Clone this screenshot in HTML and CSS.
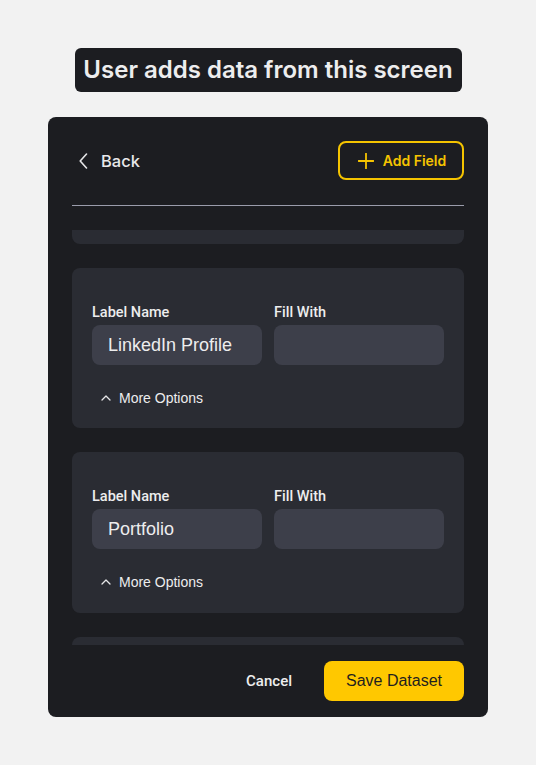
FILE: index.html
```html
<!DOCTYPE html>
<html>
<head>
<meta charset="utf-8">
<link rel="stylesheet" href="styles.css">
</head>
<body>
<div class="page">
  <div class="title">User adds data from this screen</div>
  <div class="panel">
    <div class="header">
      <div class="back">
        <svg class="back-icon" width="9" height="16" viewBox="0 0 9 16"><path d="M7.5 1 L1.2 8 L7.5 15" fill="none" stroke="#e6e6e8" stroke-width="1.6" stroke-linecap="round" stroke-linejoin="round"/></svg>
        <span>Back</span>
      </div>
      <button class="add-btn">
        <svg width="16" height="16" viewBox="0 0 16 16"><path d="M8 0.5 V15.5 M0.5 8 H15.5" stroke="#f5c400" stroke-width="1.8" stroke-linecap="round"/></svg>
        <span>Add Field</span>
      </button>
    </div>
    <div class="divider"></div>
    <div class="scroll">
      <div class="list">
        <div class="card">
          <div class="fields">
            <div class="field"><div class="label">Label Name</div><div class="input">Email</div></div>
            <div class="field"><div class="label">Fill With</div><div class="input"></div></div>
          </div>
          <div class="more"><svg width="10" height="6" viewBox="0 0 10 6"><path d="M1 5 L5 1 L9 5" fill="none" stroke="#e6e6e8" stroke-width="1.3" stroke-linecap="round" stroke-linejoin="round"/></svg><span>More Options</span></div>
        </div>
        <div class="card">
          <div class="fields">
            <div class="field"><div class="label">Label Name</div><div class="input">LinkedIn Profile</div></div>
            <div class="field"><div class="label">Fill With</div><div class="input"></div></div>
          </div>
          <div class="more"><svg width="10" height="6" viewBox="0 0 10 6"><path d="M1 5 L5 1 L9 5" fill="none" stroke="#e6e6e8" stroke-width="1.3" stroke-linecap="round" stroke-linejoin="round"/></svg><span>More Options</span></div>
        </div>
        <div class="card">
          <div class="fields">
            <div class="field"><div class="label">Label Name</div><div class="input">Portfolio</div></div>
            <div class="field"><div class="label">Fill With</div><div class="input"></div></div>
          </div>
          <div class="more"><svg width="10" height="6" viewBox="0 0 10 6"><path d="M1 5 L5 1 L9 5" fill="none" stroke="#e6e6e8" stroke-width="1.3" stroke-linecap="round" stroke-linejoin="round"/></svg><span>More Options</span></div>
        </div>
        <div class="card">
          <div class="fields">
            <div class="field"><div class="label">Label Name</div><div class="input">GitHub</div></div>
            <div class="field"><div class="label">Fill With</div><div class="input"></div></div>
          </div>
          <div class="more"><svg width="10" height="6" viewBox="0 0 10 6"><path d="M1 5 L5 1 L9 5" fill="none" stroke="#e6e6e8" stroke-width="1.3" stroke-linecap="round" stroke-linejoin="round"/></svg><span>More Options</span></div>
        </div>
      </div>
    </div>
    <div class="footer">
      <button class="cancel">Cancel</button>
      <button class="save">Save Dataset</button>
    </div>
  </div>
</div>
</body>
</html>
```
FILE: styles.css
```css
* { box-sizing: border-box; }
html, body { margin: 0; padding: 0; }
body {
  background: #f2f2f2;
  font-family: "Liberation Sans", Arial, sans-serif;
  width: 536px;
  height: 765px;
  overflow: hidden;
}
.page {
  display: flex;
  flex-direction: column;
  align-items: center;
  padding-top: 48px;
}
.title {
  background: #1c1d21;
  color: #ededee;
  font-family: Inter, sans-serif;
  font-weight: 600;
  font-size: 24px;
  line-height: 44px;
  height: 44px;
  padding: 0;
  border-radius: 6px;
  width: 387px;
  text-align: center;
  white-space: nowrap;
}
.panel {
  margin-top: 25px;
  width: 440px;
  height: 600px;
  background: #1c1d21;
  border-radius: 8px;
  padding: 24px 24px 16px;
  display: flex;
  flex-direction: column;
}
.header {
  display: flex;
  justify-content: space-between;
  align-items: center;
  height: 39px;
}
.back {
  display: flex;
  align-items: center;
  gap: 13px;
  padding-left: 7px;
  color: #e8e8ea;
  font-family: Inter, sans-serif;
  font-weight: 500;
  font-size: 16.5px;
}
.back-icon { margin-top: 1px; }
.add-btn {
  width: 126px;
  height: 39px;
  border: 2px solid #f5c400;
  border-radius: 8px;
  background: transparent;
  color: #f5c400;
  display: flex;
  align-items: center;
  justify-content: center;
  gap: 9px;
  padding: 0 0 0 2px;
  font-family: Inter, sans-serif;
  font-weight: 600;
  font-size: 14px;
}
.divider {
  margin-top: 25px;
  height: 1px;
  background: #9a9cab;
}
.scroll {
  margin-top: 24px;
  height: 415px;
  overflow: hidden;
}
.list {
  margin-top: -147px;
  display: flex;
  flex-direction: column;
  gap: 24px;
}
.card {
  background: #2a2c33;
  border-radius: 8px;
  padding: 36px 20px 21px;
  height: 160.5px;
}
.fields {
  display: grid;
  grid-template-columns: 1fr 1fr;
  gap: 12px;
}
.label {
  color: #ededee;
  font-family: Roboto, "Liberation Sans", sans-serif;
  font-weight: 500;
  font-size: 14.5px;
  line-height: 17px;
  margin-bottom: 4px;
}
.input {
  height: 40px;
  background: #3d3f4a;
  border-radius: 8px;
  color: #ededee;
  font-size: 18px;
  line-height: 40px;
  padding-left: 16px;
}
.more {
  margin-top: 23px;
  height: 20px;
  display: flex;
  align-items: center;
  gap: 8px;
  padding-left: 9px;
  color: #ededee;
  font-size: 14px;
}
.footer {
  margin-top: 16px;
  display: flex;
  justify-content: flex-end;
  align-items: center;
  gap: 32px;
}
.cancel {
  background: transparent;
  border: none;
  color: #ededee;
  font-family: Roboto, "Liberation Sans", sans-serif;
  font-weight: 500;
  font-size: 15px;
  padding: 0;
}
.save {
  width: 140px;
  height: 40px;
  background: #ffc800;
  border: none;
  border-radius: 8px;
  color: #1f1f1f;
  font-family: "Liberation Sans", Arial, sans-serif;
  font-size: 16px;
  padding: 0;
}
```
